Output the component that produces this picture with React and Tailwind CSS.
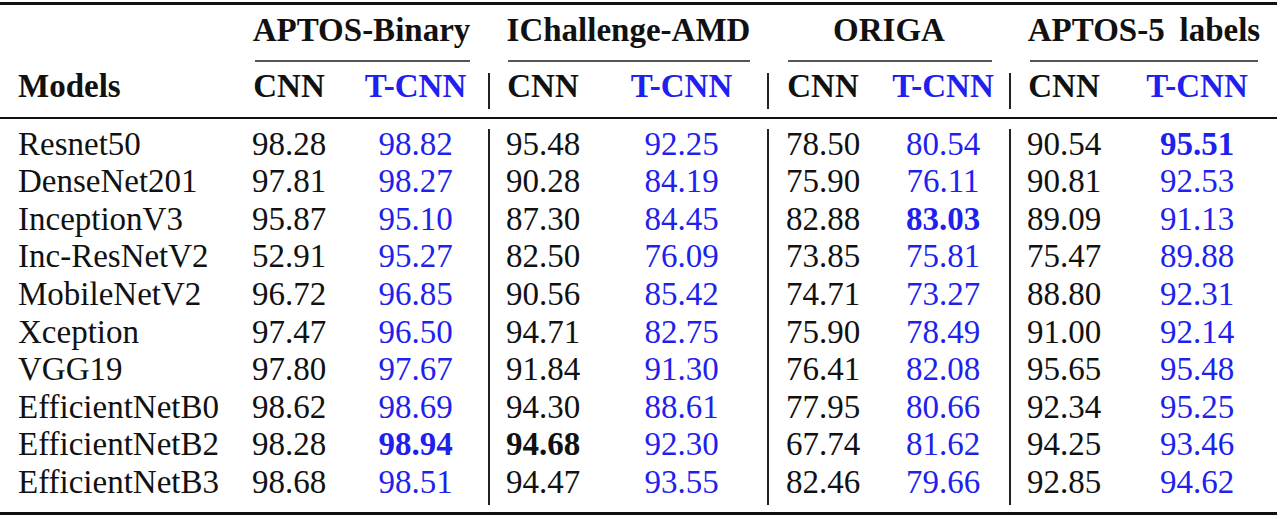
import React from "react";

const rows = [
  ["Resnet50", "98.28", "98.82", "95.48", "92.25", "78.50", "80.54", "90.54", "95.51"],
  ["DenseNet201", "97.81", "98.27", "90.28", "84.19", "75.90", "76.11", "90.81", "92.53"],
  ["InceptionV3", "95.87", "95.10", "87.30", "84.45", "82.88", "83.03", "89.09", "91.13"],
  ["Inc-ResNetV2", "52.91", "95.27", "82.50", "76.09", "73.85", "75.81", "75.47", "89.88"],
  ["MobileNetV2", "96.72", "96.85", "90.56", "85.42", "74.71", "73.27", "88.80", "92.31"],
  ["Xception", "97.47", "96.50", "94.71", "82.75", "75.90", "78.49", "91.00", "92.14"],
  ["VGG19", "97.80", "97.67", "91.84", "91.30", "76.41", "82.08", "95.65", "95.48"],
  ["EfficientNetB0", "98.62", "98.69", "94.30", "88.61", "77.95", "80.66", "92.34", "95.25"],
  ["EfficientNetB2", "98.28", "98.94", "94.68", "92.30", "67.74", "81.62", "94.25", "93.46"],
  ["EfficientNetB3", "98.68", "98.51", "94.47", "93.55", "82.46", "79.66", "92.85", "94.62"],
];

// bold cells: [rowIndex, valueIndex(1..8)]
const bold = new Set(["0-8", "2-6", "8-2", "8-3"]);

const dataCols = [
  { idx: 1, w: "w-[108px]", t: false },
  { idx: 2, w: "w-[145px]", t: true },
  { v: true },
  { idx: 3, w: "w-[106px]", t: false },
  { idx: 4, w: "w-[171px]", t: true },
  { v: true },
  { idx: 5, w: "w-[108px]", t: false },
  { idx: 6, w: "w-[132px]", t: true },
  { v: true },
  { idx: 7, w: "w-[106px]", t: false },
  { idx: 8, w: "w-[160px]", t: true },
];

const groups = [
  { name: "APTOS-Binary", w: "w-[253px]", line: "ml-[20px] mr-[18px]" },
  { name: "IChallenge-AMD", w: "w-[277px]", line: "ml-[18px] mr-[17px]" },
  { name: "ORIGA", w: "w-[240px]", line: "ml-[19px] mr-[17px]" },
  { name: "APTOS-5 labels", w: "w-[266px]", line: "ml-[19px] mr-[19px]" },
];

function Gap() {
  return <div className="w-[2px] shrink-0" />;
}

export default function App() {
  return (
    <div
      className="min-h-screen bg-white text-[#111] text-[33px] leading-[37.6px]"
      style={{ fontFamily: '"Liberation Serif", "Times New Roman", serif' }}
    >
      <div className="w-[1277px] pt-[2px]">
        {/* top rule */}
        <div className="h-[3px] bg-[#111]" />

        {/* header row 1 */}
        <div className="flex h-[55px] pt-[7px] font-bold">
          <div className="w-[235px] shrink-0" />
          {groups.map((g, i) => (
            <React.Fragment key={g.name}>
              {i > 0 && <Gap />}
              <div className={`${g.w} shrink-0 text-center whitespace-pre`}>{g.name === "APTOS-5 labels" ? "APTOS-5\u2009 labels" : g.name}</div>
            </React.Fragment>
          ))}
        </div>

        {/* cmidrules */}
        <div className="flex h-[2px]">
          <div className="w-[235px] shrink-0" />
          {groups.map((g, i) => (
            <React.Fragment key={g.name}>
              {i > 0 && <Gap />}
              <div className={`${g.w} shrink-0 flex`}>
                <div className={`${g.line} flex-1 h-[2px] bg-[#555]`} />
              </div>
            </React.Fragment>
          ))}
        </div>

        {/* header row 2 */}
        <div className="flex h-[55px] font-bold">
          <div className="w-[235px] shrink-0 pl-[18px] pt-[6px]">Models</div>
          {dataCols.map((c, i) =>
            c.v ? (
              <div key={i} className="w-[2px] shrink-0 pt-[11px]">
                <div className="h-[36px] w-[1.6px] bg-[#222]" />
              </div>
            ) : (
              <div
                key={i}
                className={`${c.w} shrink-0 pt-[6px] text-center ${c.t ? "text-[#1f1fee]" : ""}`}
              >
                {c.t ? "T-CNN" : "CNN"}
              </div>
            )
          )}
        </div>

        {/* midrule */}
        <div className="h-[2px] bg-[#111]" />

        {/* body */}
        <div className="flex h-[393px]">
          <div className="w-[235px] shrink-0 pl-[18px] pt-[6.7px] flex flex-col">
            {rows.map((r) => (
              <div key={r[0]} className="h-[37.6px] whitespace-nowrap">
                {r[0]}
              </div>
            ))}
          </div>
          {dataCols.map((c, i) =>
            c.v ? (
              <div key={i} className="w-[2px] shrink-0 pt-[10px]">
                <div className="h-[376px] w-[1.6px] bg-[#222]" />
              </div>
            ) : (
              <div key={i} className={`${c.w} shrink-0 pt-[6.7px] flex flex-col text-center`}>
                {rows.map((r, ri) => (
                  <div
                    key={ri}
                    className={`h-[37.6px] ${c.t ? "text-[#1f1fee]" : ""} ${
                      bold.has(`${ri}-${c.idx}`) ? "font-bold" : ""
                    }`}
                  >
                    {r[c.idx]}
                  </div>
                ))}
              </div>
            )
          )}
        </div>

        {/* bottom rule */}
        <div className="h-[3px] bg-[#111]" />
      </div>
    </div>
  );
}
